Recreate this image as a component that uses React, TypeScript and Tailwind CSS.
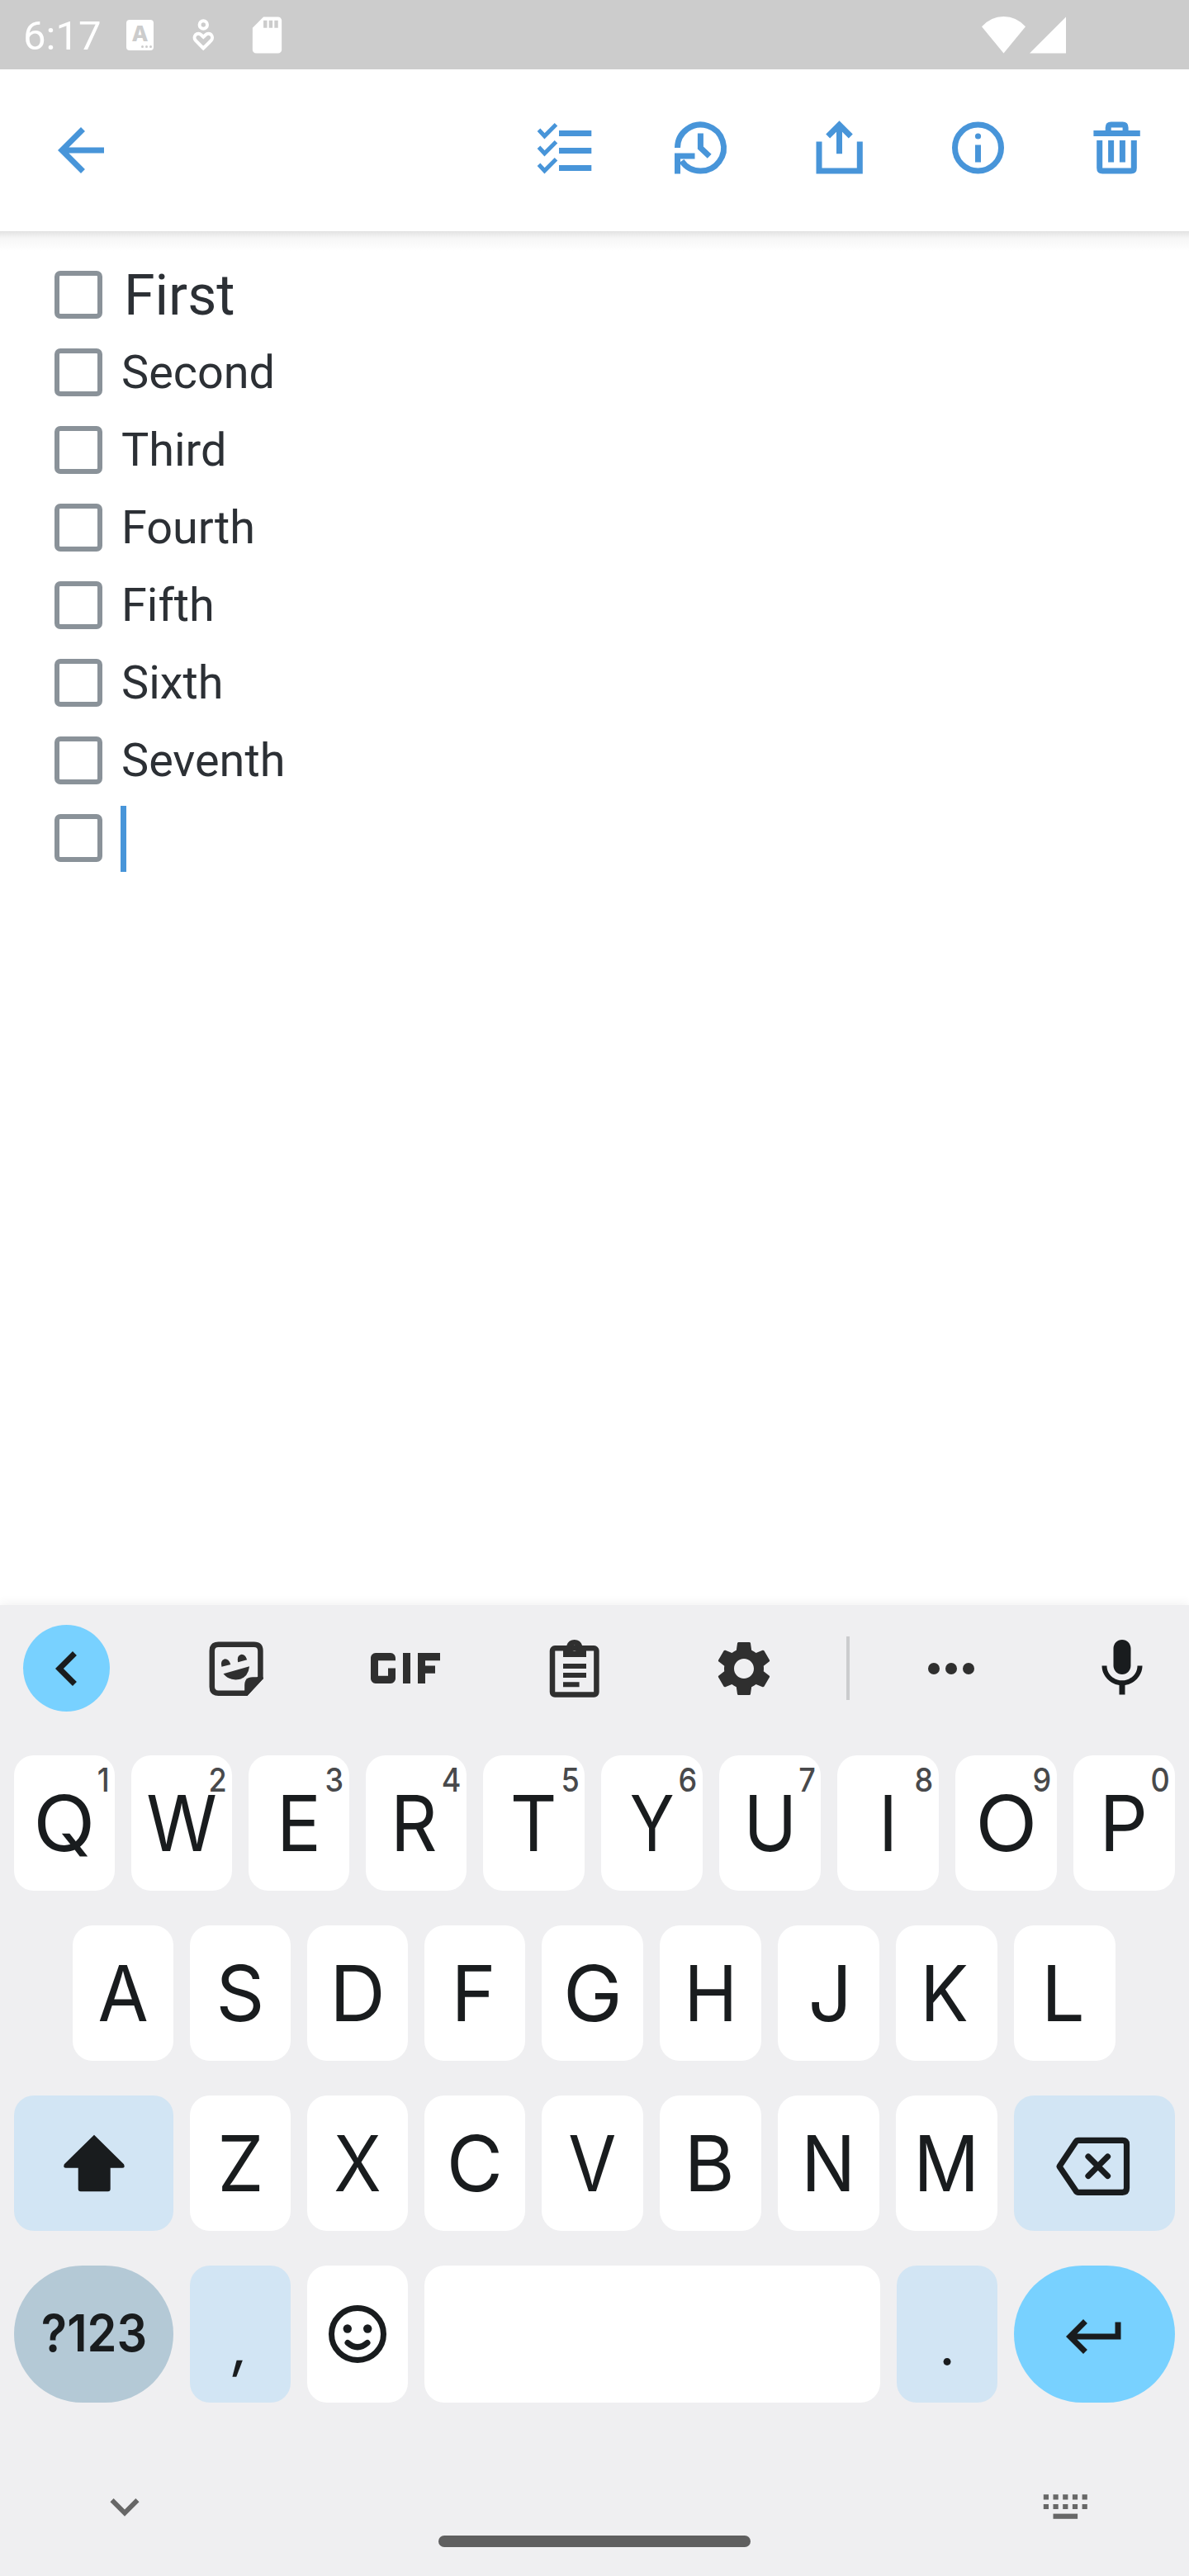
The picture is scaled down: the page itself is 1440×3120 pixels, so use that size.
import type { ReactNode } from "react";
import {
  MdArrowBack,
  MdChevronLeft,
  MdExpandMore,
  MdGif,
  MdKeyboardReturn,
  MdMic,
  MdSdCard,
  MdSettings,
} from "react-icons/md";

const notes = ["Second", "Third", "Fourth", "Fifth", "Sixth", "Seventh"];

type Letter = { ch: string; w: string; fit: string; hint?: string };

const N = "w-[122px]";
const W = "w-[123px]";

const rowOne: Letter[] = [
  { ch: "Q", w: N, fit: "scale-x-[1.05]", hint: "1" },
  { ch: "W", w: N, fit: "scale-x-[0.93]", hint: "2" },
  { ch: "E", w: N, fit: "scale-x-[0.96]", hint: "3" },
  { ch: "R", w: N, fit: "scale-x-[0.94] pr-[5px]", hint: "4" },
  { ch: "T", w: W, fit: "scale-x-[0.94]", hint: "5" },
  { ch: "Y", w: W, fit: "scale-x-[0.85]", hint: "6" },
  { ch: "U", w: W, fit: "scale-x-[0.93]", hint: "7" },
  { ch: "I", w: W, fit: "scale-x-[0.9]", hint: "8" },
  { ch: "O", w: W, fit: "scale-x-[1.05]", hint: "9" },
  { ch: "P", w: W, fit: "scale-x-[0.98] pr-[2px]", hint: "0" },
];

const rowTwo: Letter[] = [
  { ch: "A", w: N, fit: "scale-x-[0.95]" },
  { ch: "S", w: N, fit: "scale-x-[0.98]" },
  { ch: "D", w: N, fit: "scale-x-[1]" },
  { ch: "F", w: N, fit: "scale-x-[0.98] pr-[2px]" },
  { ch: "G", w: W, fit: "scale-x-[1.03]" },
  { ch: "H", w: W, fit: "scale-x-[0.93]" },
  { ch: "J", w: W, fit: "scale-x-[1] pl-[4px]" },
  { ch: "K", w: W, fit: "scale-x-[0.93] pr-[6px]" },
  { ch: "L", w: W, fit: "scale-x-[1] pr-[4px]" },
];

const rowThree: Letter[] = [
  { ch: "Z", w: N, fit: "scale-x-[0.95]" },
  { ch: "X", w: N, fit: "scale-x-[0.9]" },
  { ch: "C", w: N, fit: "scale-x-[1]" },
  { ch: "V", w: W, fit: "scale-x-[0.9]" },
  { ch: "B", w: W, fit: "scale-x-[1] pr-[3px]" },
  { ch: "N", w: W, fit: "scale-x-[0.93]" },
  { ch: "M", w: W, fit: "scale-x-[0.94]" },
];

function StatusBar() {
  return (
    <div className="flex h-[84px] items-center bg-[#cccccc] pl-[28px] text-white">
      <span className="w-[125px] pt-[3px] font-['Roboto'] text-[49px] leading-none">6:17</span>
      <div className="flex h-[37px] w-[33px] flex-col items-center rounded-[4px] bg-white pt-[6px]">
        <span className="font-['Inter'] text-[26px] leading-[22px] font-extrabold text-[#cccccc]">A</span>
        <div className="flex gap-[2px] self-end pt-[3px] pr-[2px]">
          <i className="size-[3px] rounded-full bg-[#cccccc]" />
          <i className="size-[3px] rounded-full bg-[#cccccc]" />
          <i className="size-[3px] rounded-full bg-[#cccccc]" />
        </div>
      </div>
      <svg className="ml-[45px] h-[42px] w-[30px]" viewBox="231 21 30 42" fill="none" stroke="white" strokeWidth="4">
        <circle cx="246.3" cy="30" r="4.7" />
        <path d="M246.3 58.5L236.8 49a5.2 5.2 0 0 1 0-6.8 5 5 0 0 1 6.8 0l2.7 2.6 2.7-2.6a5 5 0 0 1 6.8 0 5.2 5.2 0 0 1 0 6.8z" />
      </svg>
      <MdSdCard className="ml-[36px] size-[53px]" />
      <svg className="ml-[838px] h-[46px] w-[104px]" viewBox="1187 18 104 46" fill="white">
        <path d="M1188 31.3Q1199 19 1214.5 19T1241 31.3L1214.5 63.5z" />
        <path d="M1246 63.5L1290 19.5v44z" />
      </svg>
    </div>
  );
}

function AppBar() {
  const svg = "size-[84px]";
  return (
    <div className="flex h-[196px] items-center justify-between bg-white pr-[45px] pl-[56px] text-[#4895d9]">
      <MdArrowBack className="size-[84px]" />
      <div className="flex gap-[84px] pb-[7px]">
        <svg className={svg} viewBox="639 136.5 84 84" fill="none" stroke="currentColor">
          <path strokeWidth="7" d="M677 161h39.3M677 182h39.3M677 203h39.3" />
          <path strokeWidth="5" d="M652.5 156.7l7 7.6 14-14M652.5 177.7l7 7.6 14-14M652.5 198.7l7 7.6 14-14" />
        </svg>
        <svg className={svg} viewBox="807 136.5 84 84" fill="none" stroke="currentColor" strokeWidth="7">
          <path d="M820.5 178.5a28 28 0 1 1 5 16" />
          <path d="M820.5 210v-21.5h21" />
          <path d="M848.4 161v17.5l10.8 10.3" />
        </svg>
        <svg className={svg} viewBox="975 136.5 84 84" fill="none" stroke="currentColor" strokeWidth="7">
          <path d="M992 171v35.5h49.3V171M1016.5 185.7V151M1002.7 164.5l13.8-13.8 13.8 13.8" />
        </svg>
        <svg className={svg} viewBox="1143 136.5 84 84" fill="none" stroke="currentColor" strokeWidth="7">
          <circle cx="1184.5" cy="178.5" r="28" />
          <path d="M1184.5 175v21" />
          <circle cx="1184.5" cy="164.5" r="3.6" fill="currentColor" stroke="none" />
        </svg>
        <svg className={svg} viewBox="1311 136.5 84 84" fill="none" stroke="currentColor" strokeWidth="7">
          <path d="M1324.4 161h56.4M1342.2 160v-6q0-3.5 3.5-3.5h13.9q3.5 0 3.5 3.5v6" />
          <path d="M1331.7 169.5V203q0 3.5 3.5 3.5h34.6q3.5 0 3.5-3.5v-33.5M1345.6 169.5V196M1359.4 169.5V196" />
        </svg>
      </div>
    </div>
  );
}

function Checkbox() {
  return <span className="size-[58px] shrink-0 rounded-[7px] border-[6.5px] border-[#8a9299]" />;
}

function Note() {
  const row = "flex h-[94px] items-center";
  return (
    <div className="flex h-[1664px] flex-col bg-white font-['Roboto'] text-[56px] leading-none text-[#2c3035]">
      <div className="h-[24px] bg-linear-to-b from-[#e2e2e2] via-[#f6f6f6] via-35% to-white" />
      <div className="flex flex-col pt-[6px] pl-[66px]">
        <div className={row}>
          <Checkbox />
          <span className="pt-[2px] pl-[26px] text-[68px]">First</span>
        </div>
        {notes.map((n) => (
          <div key={n} className={row}>
            <Checkbox />
            <span className="pt-[2px] pl-[23px] text-[55.8px]">{n}</span>
          </div>
        ))}
        <div className={row}>
          <Checkbox />
          <span className="mt-[2px] ml-[22px] h-[80px] w-[7px] bg-[#4895d9]" />
        </div>
      </div>
    </div>
  );
}

function Toolbar() {
  return (
    <div className="flex h-[153px] items-center pl-[28px] text-[#2f2f2f]">
      <div className="flex size-[105px] items-center justify-center rounded-full bg-[#78d1ff] text-[#191c1e]">
        <MdChevronLeft className="size-[84px]" />
      </div>
      <svg className="ml-[118px] size-[70px]" viewBox="251 1986 70 70" fill="#2f2f2f">
        <path
          fill="none"
          stroke="#2f2f2f"
          strokeWidth="6.5"
          d="M298 2050.7H264.5q-7.7 0-7.7-7.7v-43.5q0-7.7 7.7-7.7h43.2q7.7 0 7.7 7.7v32.5z"
        />
        <path d="M296.2 2054v-13q0-9.8 9.8-9.8h12.7v2.1L299.4 2054z" />
        <path d="M268.4 2018.8q-1.8-7.8 3.2-9.4 5.4-1 7.7 6.6zM288.2 2013.2q-1.6-7.8 3.4-9.3 5.4-1 7.6 6.4z" />
        <path d="M270.5 2027.2l31.6-9q-1.6 13.4-12.3 15.8-11.6 2.2-19.3-6.8z" />
      </svg>
      <MdGif viewBox="5 9 14 6" preserveAspectRatio="none" className="ml-[128px] h-[37px] w-[84px]" />
      <svg className="ml-[131px] h-[72px] w-[64px]" viewBox="664 1985 64 72" fill="none" stroke="#2f2f2f">
        <rect x="669" y="1996.3" width="53.4" height="56.2" rx="3" strokeWidth="6.5" />
        <path
          fill="#2f2f2f"
          stroke="none"
          fillRule="evenodd"
          d="M682 2007v-14h4.3a9.8 9.8 0 0 1 18.8 0h4.9v14zM695.7 1992.7a3.6 3.6 0 1 0 .01 0z"
        />
        <path strokeWidth="6" d="M682 2018h28M682 2029h28M682 2040.3h19.6" />
      </svg>
      <MdSettings className="ml-[133px] size-[80px]" />
      <span className="ml-[84px] h-[77px] w-[4px] bg-[#cbccce]" />
      <div className="ml-[95px] flex gap-[7px]">
        <i className="size-[14px] rounded-full bg-[#2f2f2f]" />
        <i className="size-[14px] rounded-full bg-[#2f2f2f]" />
        <i className="size-[14px] rounded-full bg-[#2f2f2f]" />
      </div>
      <MdMic className="ml-[137px] size-[84px] shrink-0 text-[#191c1e]" />
    </div>
  );
}

function LetterKey({ ch, w, fit, hint }: Letter) {
  return (
    <div className={`${w} relative flex h-full items-center justify-center rounded-[24px] bg-white`}>
      <span className={`${fit} text-[93.5px] leading-[72px]`}>{ch}</span>
      {hint && (
        <span className="absolute top-[14px] right-[6.5px] origin-right scale-x-[0.9] text-[40px] leading-[32px] font-medium text-[#48494b]">
          {hint}
        </span>
      )}
    </div>
  );
}

function Key({ className, children }: { className: string; children?: ReactNode }) {
  return <div className={`${className} flex h-full items-center justify-center`}>{children}</div>;
}

function Keyboard() {
  return (
    <div className="h-[1176px] bg-[#efeff1] font-['Inter'] text-[#191c1e] shadow-[0_-2px_12px_rgba(0,0,0,0.06)]">
      <Toolbar />
      <div className="flex flex-col gap-[42px] pt-[29px] pl-[17px]">
        <div className="flex h-[164px] gap-5">
          {rowOne.map((k) => (
            <LetterKey key={k.ch} {...k} />
          ))}
        </div>
        <div className="flex h-[164px] gap-5 pl-[71px]">
          {rowTwo.map((k) => (
            <LetterKey key={k.ch} {...k} />
          ))}
        </div>
        <div className="flex h-[164px] gap-5">
          <Key className="w-[193px] rounded-[24px] bg-[#d2e5f4]">
            <svg className="h-[72px] w-[78px]" viewBox="74 2584 78 72" fill="#191c1e">
              <path d="M113 2585.7l36 35.6q2 4.5-2 4.5h-14.3v25.4q0 3-3 3H96.7q-3 0-3-3v-25.4H79q-4 0-2.2-4.5z" />
            </svg>
          </Key>
          {rowThree.map((k) => (
            <LetterKey key={k.ch} {...k} />
          ))}
          <Key className="w-[195px] rounded-[24px] bg-[#d2e5f4] pt-[7px] pr-[3px]">
            <svg
              className="h-[74px] w-[92px]"
              viewBox="1278 2587 92 74"
              fill="none"
              stroke="#191c1e"
              strokeWidth="7.2"
              strokeLinecap="round"
              strokeLinejoin="round"
            >
              <path d="M1306 2592.3h53.5q5 0 5 5v53q0 5-5 5H1306q-2 0-3-1.7L1283 2624l20-30q1-1.700 3-1.700z" />
              <path d="M1318 2612l23.500 23.500M1341.500 2612L1318 2635.500" />
            </svg>
          </Key>
        </div>
        <div className="flex h-[166px] gap-5">
          <Key className="w-[193px] rounded-full bg-[#b4c9d6]">
            <span className="scale-x-[0.93] pb-[3px] text-[62px] leading-none font-semibold">?123</span>
          </Key>
          <Key className="w-[122px] rounded-[24px] bg-[#d2e5f4] pt-[26px]">
            <span className="-skew-x-6 text-[72px] leading-none">,</span>
          </Key>
          <Key className="w-[122px] rounded-[24px] bg-white">
            <svg
              className="size-[72px]"
              viewBox="397 2791 72 72"
              fill="none"
              stroke="#191c1e"
              strokeWidth="7"
              strokeLinecap="round"
            >
              <circle cx="433" cy="2827" r="31.500" />
              <path d="M421 2837.500q12 10.500 24 0" />
              <circle cx="420.800" cy="2820.500" r="5.200" fill="#191c1e" stroke="none" />
              <circle cx="445.200" cy="2820.500" r="5.200" fill="#191c1e" stroke="none" />
            </svg>
          </Key>
          <Key className="w-[552px] rounded-[24px] bg-white" />
          <Key className="w-[122px] rounded-[24px] bg-[#d2e5f4] pt-[26px]">
            <span className="text-[68px] leading-none">.</span>
          </Key>
          <Key className="w-[195px] rounded-full bg-[#78d1ff] pt-[6px]">
            <MdKeyboardReturn className="size-[84px]" />
          </Key>
        </div>
      </div>
      <div className="flex items-start pt-[91px] pl-[116px] text-[#676767]">
        <MdExpandMore className="size-[70px]" />
        <div className="mt-[70px] ml-[345px] h-[14px] w-[378px] rounded-full bg-[#5f5f5f]" />
        <svg className="mt-[18px] ml-[352px] h-[34px] w-[58px]" viewBox="1261 3019 58 34" fill="none" stroke="currentColor">
          <path strokeWidth="6.200" strokeDasharray="6.200 5.500" d="M1263.800 3024.300h53.200M1263.800 3036h53.200" />
          <path strokeWidth="6.200" d="M1275.500 3047.700h29.600" />
        </svg>
      </div>
    </div>
  );
}

export default function App() {
  return (
    <div className="h-[3120px] w-[1440px] overflow-hidden bg-white">
      <StatusBar />
      <AppBar />
      <Note />
      <div className="relative">
        <Keyboard />
      </div>
    </div>
  );
}
